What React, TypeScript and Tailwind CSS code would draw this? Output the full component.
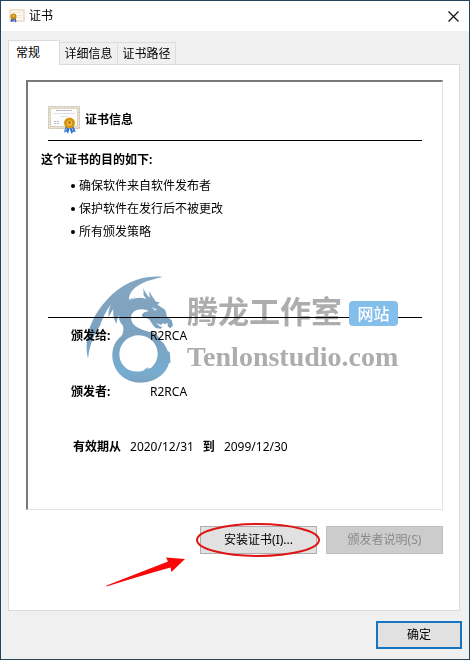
import type { ReactNode } from 'react'

const purposes = ['确保软件来自软件发布者', '保护软件在发行后不被更改', '所有颁发策略']

const tabs = [
  { label: '详细信息', width: 'w-[58px]' },
  { label: '证书路径', width: 'w-[58px]' },
]

const SmallCertificate = () => (
  <svg width="16" height="14" viewBox="0 0 16 14" aria-hidden="true">
    <rect x="1" y="1" width="14" height="11" fill="#fffaf3" stroke="#e3c9a3" />
    <path d="M3 3.5h10M8 6.5h5M8 8.5h5" stroke="#f1e4d3" />
    <path d="M2.5 9l-1 4 2-.8.8 1.3L5 10l1 3.500 1.500-1-1-3.500z" fill="#2f5fc4" />
    <circle cx="4.500" cy="7.500" r="3" fill="#c18a12" />
    <circle cx="4.500" cy="7" r="1.200" fill="#edc04c" />
  </svg>
)

const Certificate = () => (
  <svg width="32" height="28" viewBox="0 0 32 28" aria-hidden="true">
    <rect x=".5" y=".5" width="31" height="22" fill="#e9e0cf" stroke="#c9bda8" strokeDasharray="2 1" />
    <rect x="2.500" y="2.500" width="27" height="18" fill="#fdfdfd" stroke="#d9d3c6" />
    <path d="M8 4.500h16" stroke="#b4b3b7" strokeDasharray="3 .5" />
    <path d="M5 7.500h22M12 10.500h8" stroke="#dde1ea" />
    <path d="M6 15.500h6M6 17.500h5" stroke="#b8bdc4" strokeDasharray="2 1" />
    <path d="M17.500 20l-1.500 6.500 2.800-.8 1.400 2L21.500 22l2 6 1.700-2.300 2.500.4L25.500 20z" fill="#2e73d8" />
    <path d="M18.500 22l-1.200 3.500M24 22l1.200 3" stroke="#8dbaf5" />
    <circle cx="21.500" cy="17" r="5.500" fill="#d99a12" />
    <circle cx="21.500" cy="17" r="3.500" fill="#f2bf3c" stroke="#c48b10" />
    <circle cx="21.500" cy="16.500" r="1.500" fill="#b07a12" />
  </svg>
)

const Dragon = () => (
  <svg className="mix-blend-multiply" width="90" height="110" viewBox="15 30 270 330" aria-hidden="true">
    <defs>
      <linearGradient id="dragon" x1="0" y1="0" x2="0" y2="1">
        <stop offset="0" stopColor="#84a6c0" />
        <stop offset="0.600" stopColor="#7ba2c0" />
        <stop offset="0.900" stopColor="#76adcf" />
        <stop offset="1" stopColor="#7ba2c0" />
      </linearGradient>
    </defs>
    <path
      fill="url(#dragon)"
      fillRule="evenodd"
      d="M248 36C190 28 125 55 82 103C38 150 8 215 24 282C28 240 42 208 60 182C66 162 78 138 93 118
         C87 132 84 144 86 156C92 146 96 138 100 132C98 150 102 166 110 176C111 166 112 158 115 150
         C116 164 121 174 128 181C132 192 131 204 122 215C103 230 96 252 97 276C100 322 137 353 181 353
         C225 352 259 327 267 294L272 293C270 284 271 270 269 262L263 258C259 245 250 232 240 226
         C239 217 232 208 216 202C190 197 164 187 156 171C149 156 155 140 171 135C184 131 199 133 207 140
         C197 139 185 144 186 153C190 160 203 157 209 165C216 176 222 188 231 190L242 191L247 187
         L238 183L229 174L243 180L249 174L255 178L262 173L264 185L272 190L279 181L275 166L262 156
         C257 145 260 138 252 132C244 126 237 122 232 119L239 112L228 110C222 102 214 92 208 78L209 99
         C202 91 194 82 190 69L191 91L199 102C185 97 171 97 151 105L169 94L147 104
         C147 82 162 67 184 56C205 45 226 42 248 36Z
         M176 211C209 212 232 235 233 265C233 284 225 299 213 309L202 311L204 306L189 317
         C150 328 118 303 118 267C119 235 145 211 176 211Z"
    />
    <path d="M215 127l17 6-8 4z" fill="#d8e4ed" />
  </svg>
)

// multiplied over the certificate text, only the badge is opaque
const Watermark = () => (
  <div className="pointer-events-none absolute left-[57px] top-[193px] flex gap-3" aria-hidden="true">
    <Dragon />
    <div className="pt-[22px] font-['Liberation_Serif','Noto_Sans_CJK_SC',serif] font-bold text-[#adadad]">
      <div className="flex h-8 items-center gap-[7px]">
        <span className="whitespace-nowrap text-[31px] leading-8 mix-blend-multiply">腾龙工作室</span>
        <span className="h-[25px] w-[49px] rounded-[4px] bg-[#84bfec] text-center font-['Noto_Sans_CJK_SC',sans-serif] text-base leading-6 font-medium text-white">
          网站
        </span>
      </div>
      <div className="mt-3 text-[28px] leading-8">Tenlonstudio.com</div>
    </div>
  </div>
)

const Field = ({ label, children }: { label: string; children: ReactNode }) => (
  <div className="flex leading-4">
    <dt className="w-[79px] font-bold">{label}</dt>
    <dd>{children}</dd>
  </div>
)

// hand-drawn marks pointing at the install button
const Highlight = () => (
  <svg
    className="pointer-events-none absolute -top-[3px] right-[122px]"
    width="215"
    height="66"
    viewBox="0 0 215 66"
    aria-hidden="true"
  >
    <ellipse cx="152" cy="17" rx="61" ry="16" fill="none" stroke="#e01414" strokeWidth="2" />
    <path d="M.5 62.500L62 38.500L60 34.500L79 36L65.500 49L64.500 44.500Q34 53 .5 63.500z" fill="#f80808" />
  </svg>
)

export default function App() {
  return (
    <main className="flex min-h-screen flex-col border border-[#244459] bg-[#f0f0f0] font-['Noto_Sans','Noto_Sans_CJK_SC',sans-serif] text-xs text-black">
      <header className="flex h-[30px] items-center bg-white pl-2">
        <SmallCertificate />
        <h1 className="ml-1 flex-1">证书</h1>
        <button type="button" aria-label="关闭" className="grid h-full w-[31px] place-items-center">
          <svg width="11" height="11" viewBox="0 0 11 11" aria-hidden="true">
            <path d="M.5.5l10 10M10.500.5l-10 10" stroke="#111" strokeWidth="1.200" />
          </svg>
        </button>
      </header>

      <div role="tablist" className="ml-[7px] mt-[9px] flex h-6 items-end">
        <button
          type="button"
          role="tab"
          aria-selected="true"
          className="relative z-10 -mb-px h-[25px] w-[52px] border border-b-0 border-[#dcdcdc] bg-white pb-px pr-3"
        >
          常规
        </button>
        {tabs.map((tab) => (
          <button
            key={tab.label}
            type="button"
            role="tab"
            aria-selected="false"
            className={`${tab.width} h-[22px] border border-b-0 border-l-0 border-[#dcdcdc] whitespace-nowrap`}
          >
            {tab.label}
          </button>
        ))}
      </div>

      <section className="ml-[7px] mr-[9px] flex flex-1 flex-col border border-[#dcdcdc] bg-white pb-14 pl-[17px] pr-4 pt-[15px]">
        <div className="relative flex-1 border-2 border-b border-r border-[#e3e3e3] border-l-[#7a7a7a] border-t-[#7a7a7a]">
          <div className="pl-5 pr-5 pt-6">
            <div className="flex items-center gap-[5px] border-b border-black pb-[6px]">
              <Certificate />
              <h2 className="font-bold">证书信息</h2>
            </div>
            <h3 className="-ml-[7px] mt-[11px] font-bold leading-4">这个证书的目的如下:</h3>
            <ul className="ml-[23px] mt-[6px] leading-[23px]">
              {purposes.map((purpose) => (
                <li key={purpose} className="flex items-center gap-1">
                  <span className="size-1 rounded-full bg-black" />
                  {purpose}
                </li>
              ))}
            </ul>
            <hr className="mt-[74px] border-black" />
            <dl className="ml-[23px] mt-[10px] flex flex-col gap-10">
              <Field label="颁发给:">R2RCA</Field>
              <Field label="颁发者:">R2RCA</Field>
            </dl>
            <p className="ml-[25px] mt-[39px] flex gap-[9px] leading-4">
              <strong>有效期从</strong>
              <span>2020/12/31</span>
              <strong>到</strong>
              <span>2099/12/30</span>
            </p>
          </div>
          <Watermark />
        </div>

        <div className="relative mt-4 flex justify-end gap-[9px]">
          <button type="button" className="h-7 w-[117px] border border-[#adadad] bg-[#e1e1e1]">
            安装证书(I)...
          </button>
          <button type="button" disabled className="h-7 w-[117px] border border-[#bfbfbf] bg-[#cccccc] text-[#8a8a8a]">
            颁发者说明(S)
          </button>
          <Highlight />
        </div>
      </section>

      <footer className="flex justify-end pb-[10px] pr-[7px] pt-[10px]">
        <button type="button" className="h-7 w-[86px] border-2 border-[#1874be] bg-[#e1e1e1]">
          确定
        </button>
      </footer>
    </main>
  )
}
